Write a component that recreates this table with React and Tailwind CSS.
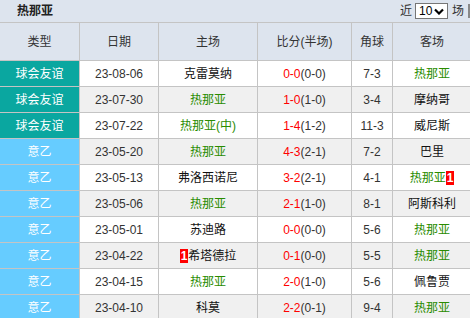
import React from "react";

const rows = [
  { t: "球会友谊", c: "teal", d: "23-08-06", h: "克雷莫纳", hg: false, s: "0-0", hs: "(0-0)", k: "7-3", a: "热那亚", ag: true },
  { t: "球会友谊", c: "teal", d: "23-07-30", h: "热那亚", hg: true, s: "1-0", hs: "(1-0)", k: "3-4", a: "摩纳哥", ag: false },
  { t: "球会友谊", c: "teal", d: "23-07-22", h: "热那亚(中)", hg: true, s: "1-4", hs: "(1-2)", k: "11-3", a: "威尼斯", ag: false },
  { t: "意乙", c: "blue", d: "23-05-20", h: "热那亚", hg: true, s: "4-3", hs: "(2-1)", k: "7-2", a: "巴里", ag: false },
  { t: "意乙", c: "blue", d: "23-05-13", h: "弗洛西诺尼", hg: false, s: "3-2", hs: "(2-1)", k: "4-1", a: "热那亚", ag: true, ab: "1" },
  { t: "意乙", c: "blue", d: "23-05-06", h: "热那亚", hg: true, s: "2-1", hs: "(1-0)", k: "8-1", a: "阿斯科利", ag: false },
  { t: "意乙", c: "blue", d: "23-05-01", h: "苏迪路", hg: false, s: "0-0", hs: "(0-0)", k: "5-6", a: "热那亚", ag: true },
  { t: "意乙", c: "blue", d: "23-04-22", h: "希塔德拉", hg: false, hb: "1", s: "0-1", hs: "(0-0)", k: "5-5", a: "热那亚", ag: true },
  { t: "意乙", c: "blue", d: "23-04-15", h: "热那亚", hg: true, s: "2-0", hs: "(1-0)", k: "5-6", a: "佩鲁贾", ag: false },
  { t: "意乙", c: "blue", d: "23-04-10", h: "科莫", hg: false, s: "2-2", hs: "(0-1)", k: "9-4", a: "热那亚", ag: true },
];

const Badge = ({ n }) => (
  <span className="inline-block bg-[#ff0000] text-white text-[12px] leading-[14px] px-[1px] font-bold">{n}</span>
);

export default function App() {
  return (
    <div
      className="w-[470px] h-[318px] overflow-hidden bg-[#dde4ee] text-[12px] text-[#333]"
      style={{ fontFamily: '"Liberation Sans", Arial, "Noto Sans CJK SC", sans-serif' }}
    >
      <div className="h-[22px] flex items-center justify-between pl-[17px]">
        <span className="font-bold text-[12px] text-[#222] leading-none">热那亚</span>
        <div className="flex items-center h-full">
          <span className="mr-[3px] text-[12px] text-[#333]">近</span>
          <div className="w-[33px] h-[16px] bg-white border border-[#767676] flex items-center justify-between pl-[3px] pr-[3px] text-[12px] text-black leading-none">
            <span>10</span>
            <svg width="10" height="7" viewBox="0 0 10 7">
              <path d="M1 1.5 L5 5.5 L9 1.5" fill="none" stroke="#000" strokeWidth="2.2" />
            </svg>
          </div>
          <span className="ml-[4px] text-[12px] text-[#333]">场</span>
          <span className="ml-[4px] w-[2px] h-[14px] bg-[#888]"></span>
        </div>
      </div>
      <div
        className="grid gap-px bg-[#c4c4c4] pt-px"
        style={{}}
      >
        <div className="grid grid-cols-[79px_78px_98px_93px_40px_78px] gap-px h-[37px]">
          {["类型", "日期", "主场", "比分(半场)", "角球", "客场"].map((x) => (
            <div key={x} className="bg-[#dde4ee] flex items-center justify-center text-[#333]">
              {x}
            </div>
          ))}
        </div>
        {rows.map((r, i) => {
          const bg = i % 2 === 0 ? "bg-white" : "bg-[#f0f0f0]";
          return (
            <div key={i} className="grid grid-cols-[79px_78px_98px_93px_40px_78px] gap-px h-[25px]">
              <div className={`${r.c === "teal" ? "bg-[#0aa7a0]" : "bg-[#66ccff]"} text-white flex items-center justify-center`}>
                {r.t}
              </div>
              <div className={`${bg} flex items-center justify-center`}>{r.d}</div>
              <div className={`${bg} flex items-center justify-center ${r.hg ? "text-[#2a8c00]" : "text-[#111]"}`}>
                {r.hb && <Badge n={r.hb} />}
                {r.h}
              </div>
              <div className={`${bg} flex items-center justify-center`}>
                <span className="text-[#ff0000]">{r.s}</span>
                <span>{r.hs}</span>
              </div>
              <div className={`${bg} flex items-center justify-center`}>{r.k}</div>
              <div className={`${bg} flex items-center justify-center ${r.ag ? "text-[#2a8c00]" : "text-[#111]"}`}>
                {r.a}
                {r.ab && <Badge n={r.ab} />}
              </div>
            </div>
          );
        })}
      </div>
    </div>
  );
}
